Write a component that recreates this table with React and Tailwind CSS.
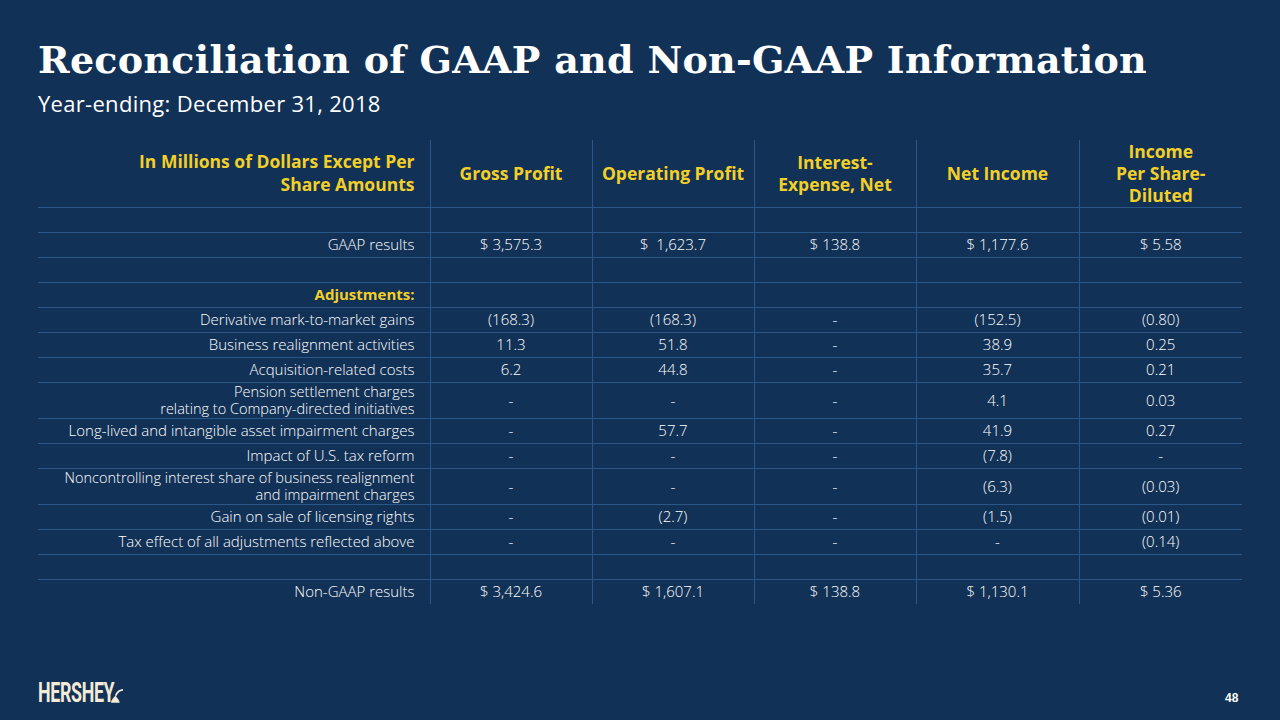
const rows = [
  { label: "", vals: ["", "", "", "", ""] },
  { label: "GAAP results", vals: ["$ 3,575.3", "$  1,623.7", "$ 138.8", "$ 1,177.6", "$ 5.58"] },
  { label: "", vals: ["", "", "", "", ""] },
  { label: "Adjustments:", vals: ["", "", "", "", ""], head: true },
  { label: "Derivative mark-to-market gains", vals: ["(168.3)", "(168.3)", "-", "(152.5)", "(0.80)"] },
  { label: "Business realignment activities", vals: ["11.3", "51.8", "-", "38.9", "0.25"] },
  { label: "Acquisition-related costs", vals: ["6.2", "44.8", "-", "35.7", "0.21"] },
  {
    label: ["Pension settlement charges", "relating to Company-directed initiatives"],
    vals: ["-", "-", "-", "4.1", "0.03"],
    tall: true,
  },
  { label: "Long-lived and intangible asset impairment charges", vals: ["-", "57.7", "-", "41.9", "0.27"] },
  { label: "Impact of U.S. tax reform", vals: ["-", "-", "-", "(7.8)", "-"] },
  {
    label: ["Noncontrolling interest share of business realignment", "and impairment charges"],
    vals: ["-", "-", "-", "(6.3)", "(0.03)"],
    tall: true,
  },
  { label: "Gain on sale of licensing rights", vals: ["-", "(2.7)", "-", "(1.5)", "(0.01)"] },
  { label: "Tax effect of all adjustments reflected above", vals: ["-", "-", "-", "-", "(0.14)"] },
  { label: "", vals: ["", "", "", "", ""] },
  { label: "Non-GAAP results", vals: ["$ 3,424.6", "$ 1,607.1", "$ 138.8", "$ 1,130.1", "$ 5.36"] },
];

const headers = [
  ["Gross Profit"],
  ["Operating Profit"],
  ["Interest-", "Expense, Net"],
  ["Net Income"],
  ["Income", "Per Share-", "Diluted"],
];

const line = "border-[#2a5787]";

function Kiss() {
  return (
    <svg width="13" height="20" viewBox="0 0 14 20" className="-ml-[1px]">
      <path d="M1 19.5 C1.5 15.5 4 14 6 11.5 C7 14 10 15.5 10.5 19.5 Z" fill="#f3ead8" />
      <path d="M6.5 11 C8 7.5 10.5 6 13.5 5.5" stroke="#f3ead8" strokeWidth="2" fill="none" strokeLinecap="round" />
    </svg>
  );
}

export default function App() {
  return (
    <div className="w-[1280px] h-[720px] bg-[#123156] relative overflow-hidden font-['Open_Sans',sans-serif] text-white">
      <div className="pl-[38px] pt-[37px]">
        <h1 className="font-['DejaVu_Serif',serif] font-bold text-[38px] leading-[46px] tracking-[0.3px]">
          Reconciliation of GAAP and Non-GAAP Information
        </h1>
        <p className="text-[22px] leading-[28px] mt-[6px] tracking-[0.3px]">Year-ending: December 31, 2018</p>
      </div>

      <table className="ml-[38px] mt-[23px] w-[1204px] border-collapse table-fixed">
        <colgroup>
          <col className="w-[392px]" />
          <col className="w-[162px]" />
          <col className="w-[162px]" />
          <col className="w-[162px]" />
          <col className="w-[163px]" />
          <col className="w-[163px]" />
        </colgroup>
        <thead>
          <tr className="h-[67px]">
            <th className={`border-r border-b ${line} text-right pr-[15px] text-[#f3d028] font-bold text-[17.5px] leading-[23px]`}>
              In Millions of Dollars Except Per
              <br />
              Share Amounts
            </th>
            {headers.map((h, i) => (
              <th
                key={i}
                className={`border-b ${i < 4 ? "border-r" : ""} ${line} text-center text-[#f3d028] font-bold text-[17.5px] leading-[22px]`}
              >
                {h.map((t, j) => (
                  <div key={j}>{t}</div>
                ))}
              </th>
            ))}
          </tr>
        </thead>
        <tbody>
          {rows.map((r, i) => {
            const last = i === rows.length - 1;
            return (
              <tr key={i} className={r.tall ? "h-[36px]" : "h-[25px]"}>
                <td
                  className={`border-r ${last ? "" : "border-b"} ${line} text-right pr-[15px] text-[15px] ${
                    r.tall ? "leading-[17px]" : "leading-[17px]"
                  } ${r.head ? "text-[#f3d028] font-bold" : "font-light"}`}
                >
                  {Array.isArray(r.label) ? (
                    <div className="flex flex-col items-end gap-[0px]">
                      {r.label.map((t, j) => (
                        <span key={j} className="block h-[17px] leading-[17px] text-[14.5px]">
                          {t}
                        </span>
                      ))}
                    </div>
                  ) : (
                    r.label
                  )}
                </td>
                {r.vals.map((v, j) => (
                  <td
                    key={j}
                    className={`${j < 4 ? "border-r" : ""} ${last ? "" : "border-b"} ${line} text-center text-[15px] leading-[17px] font-light whitespace-pre`}
                  >
                    {v}
                  </td>
                ))}
              </tr>
            );
          })}
        </tbody>
      </table>

      <div className="absolute left-[38px] top-[682px] flex items-end">
        <span className="font-['Roboto',sans-serif] font-bold text-[27px] leading-[22px] text-[#f3ead8] tracking-[-0.5px] inline-block origin-left scale-x-[0.66] w-[73px] whitespace-nowrap">
          HERSHEY
        </span>
        <Kiss />
      </div>
      <div className="absolute left-[1225px] top-[689px] text-[12px] font-bold font-['Liberation_Sans',sans-serif]">48</div>
    </div>
  );
}
